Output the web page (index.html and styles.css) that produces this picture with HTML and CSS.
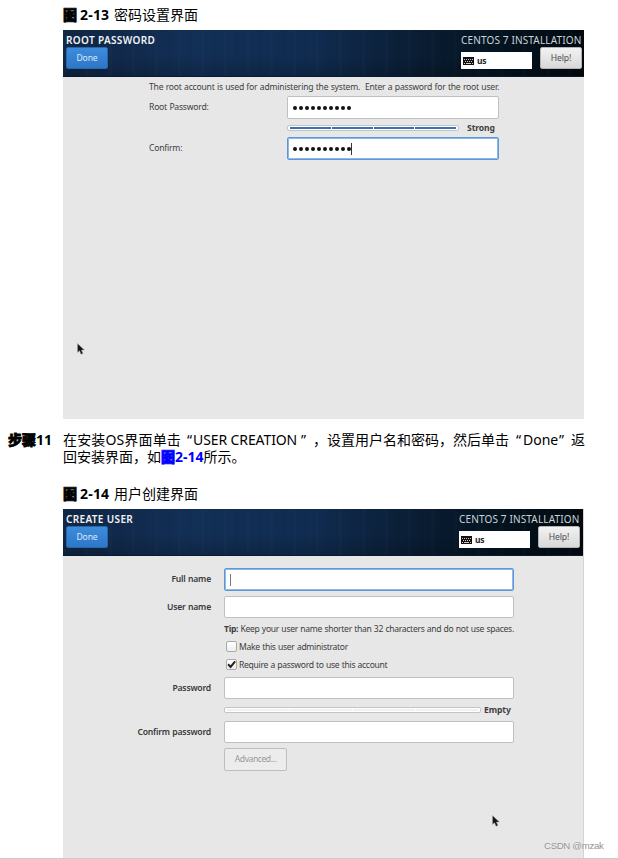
FILE: index.html
```
<!DOCTYPE html>
<html lang="zh-CN">
<head>
<meta charset="utf-8">
<title>CentOS 7 安装</title>
<link rel="stylesheet" href="styles.css">
</head>
<body>
<main class="page">
  <h2 class="caption first"><b class="heavy">图</b><b class="num">2-13</b><span>密码设置界面</span></h2>
  <section class="screen root">
    <header class="bar">
      <div class="left"><h3>ROOT PASSWORD</h3><button class="done">Done</button></div>
      <div class="right">
        <div class="product">CENTOS 7 INSTALLATION</div>
        <div class="tools">
          <div class="layout"><svg width="11" height="8" viewBox="0 0 11 8"><rect width="11" height="8" fill="#111"/><path d="M1 2.5h9" stroke="#ccc" stroke-dasharray="1 1"/><path d="M2 4.5h8" stroke="#ccc" stroke-dasharray="1 1"/><path d="M1 6.5h1M3 6.5h5M9 6.5h1" stroke="#ccc"/></svg><b>us</b></div>
          <button class="help">Help!</button>
        </div>
      </div>
    </header>
    <p class="intro">The root account is used for administering the system.&nbsp; Enter a password for the root user.</p>
    <div class="root-form">
      <label>Root Password:</label>
      <div class="field"><span class="dots"><i></i><i></i><i></i><i></i><i></i><i></i><i></i><i></i><i></i><i></i></span></div>
      <div class="strength"><div class="meter full"><i></i><i></i><i></i><i></i></div><b>Strong</b></div>
      <label>Confirm:</label>
      <div class="field focus"><span class="dots"><i></i><i></i><i></i><i></i><i></i><i></i><i></i><i></i><i></i><i></i></span><span class="caret"></span></div>
    </div>
    <svg class="pointer p1" width="9" height="13" viewBox="0 0 9 13"><path d="M.5 .5v9l2-1.8 1.5 3.6 2-.8-1.6-3.4h3z" fill="#161616" stroke="#aaa" stroke-width=".5"/></svg>
  </section>

  <div class="step">
    <div class="step-no"><b class="heavy">步骤</b><b>11</b></div>
    <div class="step-text">
      <div class="line"><span class="lead">在安装OS界面单击</span><span class="open narrow">“</span><span class="menu-name">USER CREATION</span><span class="close wide">”</span><span>，设置用户名和密码，然后单击</span><span class="open">“</span><span class="done-word">Done</span><span class="close">”</span><span>返</span></div>
      <div class="line">回安装界面，如<a><b class="heavy">图</b><b>2-14</b></a>所示。</div>
    </div>
  </div>

  <h2 class="caption second"><b class="heavy">图</b><b class="num">2-14</b><span>用户创建界面</span></h2>
  <section class="screen user">
    <header class="bar">
      <div class="left"><h3>CREATE USER</h3><button class="done">Done</button></div>
      <div class="right">
        <div class="product">CENTOS 7 INSTALLATION</div>
        <div class="tools">
          <div class="layout"><svg width="11" height="8" viewBox="0 0 11 8"><rect width="11" height="8" fill="#111"/><path d="M1 2.5h9" stroke="#ccc" stroke-dasharray="1 1"/><path d="M2 4.5h8" stroke="#ccc" stroke-dasharray="1 1"/><path d="M1 6.5h1M3 6.5h5M9 6.5h1" stroke="#ccc"/></svg><b>us</b></div>
          <button class="help">Help!</button>
        </div>
      </div>
    </header>
    <div class="user-form">
      <label>Full name</label><div class="field focus"><span class="caret tall"></span></div>
      <label>User name</label><div class="field"></div>
      <p class="tip"><b>Tip:</b> Keep your user name shorter than 32 characters and do not use spaces.</p>
      <div class="check admin"><span class="box"></span><span>Make this user administrator</span></div>
      <div class="check require"><span class="box"><svg width="10" height="9" viewBox="0 0 10 9"><path d="M1.2 4.2l2.8 3L9 1" fill="none" stroke="#222" stroke-width="2.2"/></svg></span><span>Require a password to use this account</span></div>
      <label>Password</label><div class="field"></div>
      <div class="strength"><div class="meter"><i></i><i></i><i></i><i></i></div><b>Empty</b></div>
      <label>Confirm password</label><div class="field"></div>
      <button class="advanced">Advanced...</button>
    </div>
    <svg class="pointer p2" width="9" height="13" viewBox="0 0 9 13"><path d="M.5 .5v9l2-1.8 1.5 3.6 2-.8-1.6-3.4h3z" fill="#161616" stroke="#aaa" stroke-width=".5"/></svg>
  </section>
  <div class="watermark">CSDN @mzak</div>
</main>
</body>
</html>
```
FILE: styles.css
```
* { box-sizing: border-box; }
body { margin: 0; background: #fff; color: #000; font: 14px/18px "Noto Sans", "Noto Sans CJK SC", sans-serif; }
h2, h3, p { margin: 0; font-weight: normal; }
.page { position: relative; height: 859px; padding-top: 5px; overflow: hidden; border-bottom: 1px solid #cfc8c8; }
.caption { display: flex; height: 25px; margin-left: 63px; font-size: 14px; line-height: 19px; white-space: nowrap; }
.heavy { font-weight: 900; -webkit-text-stroke: .8px currentColor; }
.num { width: 30px; margin: 0 4px 0 3px; font-size: 14px; letter-spacing: .2px; }
.screen { position: relative; width: 521px; margin-left: 63px; background: #e7e7e7; color: #404040; font: 8.6px/12px "Noto Sans", sans-serif; letter-spacing: -.22px; word-spacing: .4px; white-space: nowrap; }
.root { height: 389px; }
.user { height: 349px; border-right: 1px solid #d4d4d4; letter-spacing: -.31px; }
.bar { display: flex; justify-content: space-between; height: 47px; padding: 4px 2px 0 3px; border-bottom: 1px solid #071a30;
  background: repeating-linear-gradient(90deg, #ffffff03 0 3px, transparent 3px 11px, #00000008 11px 15px, transparent 15px 23px), linear-gradient(180deg, transparent 55%, #00000030), linear-gradient(90deg, #102644 0%, #122f56 25%, #102c51 48%, #0a1e35 67%, #031320 84%, #02090f 100%); }
.bar h3 { height: 13px; color: #f0f3f6; font-size: 10px; line-height: 13px; font-weight: 600; letter-spacing: .35px; word-spacing: 0; }
button { display: block; padding: 0; font-family: "Noto Sans", sans-serif; font-size: 8.6px; line-height: 18px; }
.done, .help { letter-spacing: -.1px; }
.done { width: 42px; height: 22px; border: 1px solid #2468ae; border-radius: 2px; background: linear-gradient(#3e8cdc, #2d77c7); color: #d9eafa; }
.product { height: 13px; color: #cbd3d8; font-size: 10px; line-height: 13px; letter-spacing: .15px; word-spacing: 0; }
.tools { display: flex; justify-content: space-between; }
.layout { display: flex; align-items: center; gap: 3px; width: 71px; height: 17px; margin-top: 5px; padding-left: 2px; background: #fff; color: #222; font-size: 8.5px; }
.help { width: 42px; height: 22px; border: 1px solid #b4b4b4; border-radius: 2px; background: linear-gradient(#f2f2f2, #d8d8d8); color: #505050; }
.right { width: 121px; }
.user .bar { padding: 4px 3px 0; }
.intro { height: 15px; margin: 4px 0 0 86px; }
.root-form { display: grid; grid-template-columns: 138px 212px; grid-template-rows: 23px 18px 23px; margin-left: 86px; }
.field { display: flex; align-items: center; padding-left: 5px; border: 1px solid #c1bfbf; border-radius: 2px; background: #fff; }
.focus { border-color: #5b97da; box-shadow: inset 0 0 0 1px #8db8e8; }
.root-form label { line-height: 23px; }
.dots { display: flex; gap: 2px; }
.dots i { width: 4px; height: 4px; border-radius: 50%; background: #111; }
.caret { width: 1px; height: 12px; background: #333; }
.caret.tall { background: #777; }
.strength { grid-column: 2; display: flex; align-items: center; color: #404040; letter-spacing: -.1px; }
.meter { display: flex; gap: 1px; width: 172px; height: 6px; padding: 1px 2px; border: 1px solid #c4c4c4; border-radius: 2px; background: #fff; }
.meter i { flex: 1; background: #f1f1f1; }
.meter.full i { background: #3971b2; }
.strength b { margin-left: 8px; }
.user-form { display: grid; grid-template-columns: 148px 290px; grid-template-rows: 23px 5px 22px 20px 17px 19px 3px 22px 22px 22px 5px 23px; column-gap: 13px; padding-top: 12px; }
.user-form label { grid-column: 1; justify-self: end; font-weight: 600; line-height: 22px; color: #3a3a3a; letter-spacing: -.2px; }
.user-form .field, .user-form .tip, .user-form .check, .user-form .strength, .advanced { grid-column: 2; }
.user-form label:nth-of-type(1), .user-form label:nth-of-type(1) + .field { grid-row: 1; }
.user-form label:nth-of-type(2), .user-form label:nth-of-type(2) + .field { grid-row: 3; }
.tip { grid-row: 4; line-height: 22px; }
.check { display: flex; align-items: center; gap: 2px; padding-left: 2px; }
.admin { grid-row: 5; }
.require { grid-row: 6; }
.box { display: flex; align-items: center; justify-content: center; width: 11px; height: 11px; border: 1px solid #aaa; border-radius: 2px; background: linear-gradient(#fff, #eee); }
.user-form label:nth-of-type(3), .user-form label:nth-of-type(3) + .field { grid-row: 8; }
.user-form .strength { grid-row: 9; }
.user-form .meter { width: 257px; }
.user-form .strength b { margin-left: 3px; }
.user-form label:nth-of-type(4), .user-form label:nth-of-type(4) + .field { grid-row: 10; }
.advanced { grid-row: 12; width: 63px; padding-bottom: 1px; border: 1px solid #bdbdbd; border-radius: 2px; background: #ececec; color: #999; letter-spacing: -.45px; }
.pointer { position: absolute; }
.p1 { left: 14px; top: 313px; }
.p2 { left: 429px; top: 306px; }
.step { display: flex; height: 65px; padding: 12px 0 0 8px; white-space: nowrap; }
.step-no { width: 55px; }
.line { display: flex; height: 17px; line-height: 17px; }
.line a { color: #00f; }
.lead { width: 119px; letter-spacing: .15px; }
.open { width: 14px; padding-right: 2px; text-align: right; }
.open.narrow { width: 11px; padding-right: 1px; }
.close { width: 14px; padding-left: 2px; }
.close.wide { width: 16px; padding-left: 4px; }
.menu-name { width: 104px; letter-spacing: -.1px; }
.done-word { width: 34px; }
.watermark { position: absolute; left: 544px; top: 839px; color: #929292; font: 9.6px/14px "Liberation Sans", sans-serif; letter-spacing: -.3px; text-shadow: 0 0 1px #fff; }
```
